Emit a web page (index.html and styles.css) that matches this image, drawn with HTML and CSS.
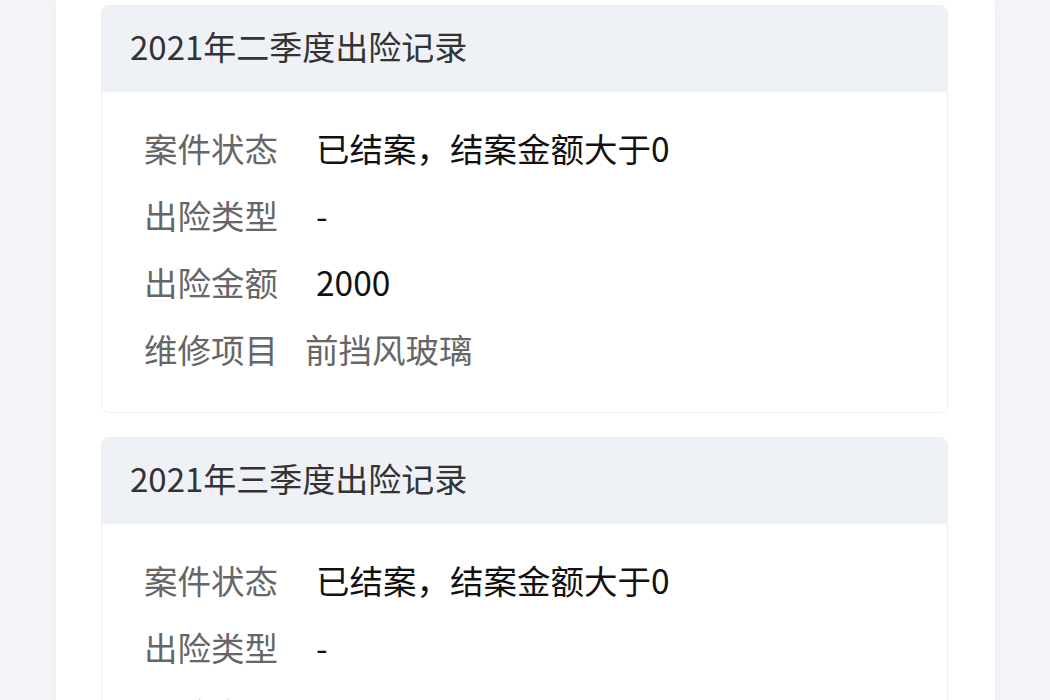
FILE: index.html
```html
<!DOCTYPE html>
<html lang="zh-CN">
<head>
  <meta charset="UTF-8">
  <meta name="viewport" content="width=device-width, initial-scale=1.0">
  <title>出险记录</title>
  <link rel="stylesheet" href="styles.css">
</head>
<body>
  <div class="page">
    <!-- 二季度 -->
    <div class="record">
      <div class="record-title">2021年二季度出险记录</div>
      <div class="record-body">
        <div class="field">
          <span class="field-label">案件状态</span>
          <span class="field-value">已结案，结案金额大于0</span>
        </div>
        <div class="field">
          <span class="field-label">出险类型</span>
          <span class="field-value">-</span>
        </div>
        <div class="field">
          <span class="field-label">出险金额</span>
          <span class="field-value">2000</span>
        </div>
        <div class="field plain">
          <span class="field-label">维修项目</span>
          <span class="field-value">前挡风玻璃</span>
        </div>
      </div>
    </div>

    <!-- 三季度 -->
    <div class="record">
      <div class="record-title">2021年三季度出险记录</div>
      <div class="record-body">
        <div class="field">
          <span class="field-label">案件状态</span>
          <span class="field-value">已结案，结案金额大于0</span>
        </div>
        <div class="field">
          <span class="field-label">出险类型</span>
          <span class="field-value">-</span>
        </div>
        <div class="field">
          <span class="field-label">出险金额</span>
          <span class="field-value">2000</span>
        </div>
        <div class="field plain">
          <span class="field-label">维修项目</span>
          <span class="field-value">前挡风玻璃</span>
        </div>
      </div>
    </div>
  </div>
</body>
</html>
```

FILE: styles.css
```css
  html, body {
    height: 100%;
    overflow: hidden;
  }

  body {
    font-family: "Noto Sans CJK SC", "Noto Sans", sans-serif;
    margin: 0;
    padding: 0;
    background: #f4f5f9;
  }

  .page {
    width: 939px;
    min-height: 100%;
    margin-left: 56px;
    padding: 5px 47px 0 45px;
    box-sizing: border-box;
    background: #fff;
    box-shadow: 0 0 14px rgba(40, 50, 80, 0.04);
  }

  .record {
    border: 1px solid #eceef1;
    border-radius: 8px;
    overflow: hidden;
    margin-bottom: 24px;
  }

  .record-title {
    display: flex;
    align-items: center;
    height: 86px;
    padding: 0 0 7px 28px;
    box-sizing: border-box;
    background: #eef1f6;
    color: #333;
    font-size: 33px;
  }

  .record-body {
    padding: 22px 0 30px 42px;
    background: #fff;
  }

  .field {
    display: flex;
    gap: 38px;
    line-height: 67px;
    font-size: 33.5px;
  }

  .field-label {
    color: #666;
  }

  .field-value {
    color: #111;
  }

  .field.plain {
    gap: 27px;
  }

  .field.plain .field-value {
    color: #666;
  }
```
